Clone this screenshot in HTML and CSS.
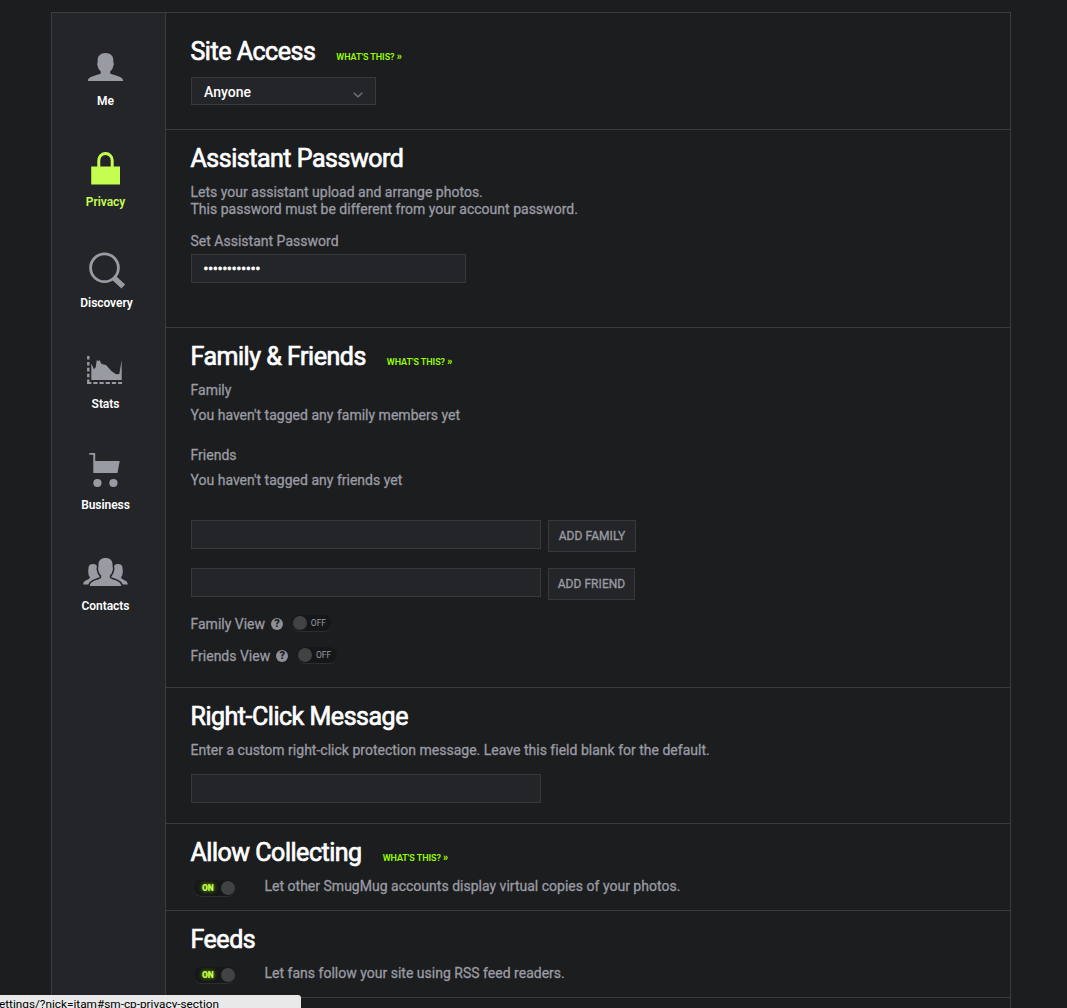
FILE: index.html
```html
<!DOCTYPE html>
<html lang="en">
<head>
<meta charset="utf-8">
<title>Account Settings - Privacy</title>
<link rel="stylesheet" href="styles.css">
</head>
<body>
<div class="panel">
  <nav class="sidebar">
    <a class="tab">
      <svg class="icon" viewBox="0 0 47 48"><path d="M23.500 9C28.500 9 31.800 12 31.300 17L31.800 20.500Q31 25 28.200 27.500V29.500C32 31.500 41.200 32 41.200 37H5.800C5.800 32 15 31.500 18.800 29.500V27.500Q16 25 15.200 20.500L15.700 17C15.200 12 18.500 9 23.500 9Z"/></svg>
      <span>Me</span>
    </a>
    <a class="tab active">
      <svg class="icon" viewBox="0 0 47 48"><path d="M9.200 21.500H38V39.500H9.200Z"/><path d="M16.800 22V15.200A6.700 6.700 0 0 1 30.200 15.200V22" fill="none" stroke="currentColor" stroke-width="3"/></svg>
      <span>Privacy</span>
    </a>
    <a class="tab discovery">
      <svg class="icon" viewBox="0 0 47 48"><circle cx="22.500" cy="21.800" r="13.900" fill="none" stroke="currentColor" stroke-width="2.800"/><path d="M31.300 31.300L41.300 40.600" stroke="currentColor" stroke-width="5.400"/></svg>
      <span>Discovery</span>
    </a>
    <a class="tab">
      <svg class="icon" viewBox="0 0 47 48"><path d="M9.300 16.500V33H39.700V13L37.300 27L34 27.300L29.700 24.300L24 18L19.700 17L17.300 13L16.300 14L14.700 13.300L13.700 20.300L12 22.300Z"/><path d="M6.300 9V36" fill="none" stroke="currentColor" stroke-width="2.400" stroke-dasharray="3.600 2.300"/><path d="M5.100 36H40" fill="none" stroke="currentColor" stroke-width="2" stroke-dasharray="4.200 2"/></svg>
      <span>Stats</span>
    </a>
    <a class="tab">
      <svg class="icon" viewBox="0 0 47 48"><path d="M7.300 5H13.200V13H37.700L35.500 25H11.300V6.800H7.300Z"/><circle cx="15.400" cy="35" r="4.100"/><circle cx="31.400" cy="35" r="4.100"/></svg>
      <span>Business</span>
    </a>
    <a class="tab">
      <svg class="icon" viewBox="0 0 47 48"><path id="side" d="M11 15C14 15 15 16.500 15.200 18.500L15 21.500L16.800 25.500L18.200 28.500C15 31 7.500 30.500 6.500 35.500H1.200C1 31 7.500 31 8 28.500Q6 26 6.200 22.500L6.500 19C6.500 16.500 8 15 11 15Z"/><use href="#side" transform="translate(47 0) scale(-1 1)"/><path class="front" d="M23.500 9C28 9 31 11.500 30.500 16.500L31 20Q30.300 24.500 27.800 26.800V28.800C31 31.500 39.200 31.500 39.200 37H7.800C7.800 31.500 16 31.500 19.200 28.800V26.800Q16.700 24.500 16 20L16.500 16.500C16 11.500 19 9 23.500 9Z"/></svg>
      <span>Contacts</span>
    </a>
  </nav>

  <main class="content">
    <section class="section access">
      <header class="head"><h2>Site Access</h2><a class="help">WHAT'S THIS? <b>»</b></a></header>
      <div class="select"><span>Anyone</span><svg class="chevron" viewBox="0 0 10 6"><path d="M.7 .7L5 4.800L9.300 .7"/></svg></div>
    </section>

    <section class="section assistant">
      <header class="head"><h2>Assistant Password</h2></header>
      <p>Lets your assistant upload and arrange photos.<br>This password must be different from your account password.</p>
      <div class="label">Set Assistant Password</div>
      <div class="field password">••••••••••••</div>
    </section>

    <section class="section family">
      <header class="head"><h2>Family &amp; Friends</h2><a class="help">WHAT'S THIS? <b>»</b></a></header>
      <p>Family</p>
      <p class="note">You haven't tagged any family members yet</p>
      <p class="group">Friends</p>
      <p class="note">You haven't tagged any friends yet</p>
      <div class="add-row first"><div class="field wide"></div><div class="button">ADD FAMILY</div></div>
      <div class="add-row"><div class="field wide"></div><div class="button friend">ADD FRIEND</div></div>
      <div class="view-row"><span class="view-name">Family View</span><span class="question">?</span><span class="toggle"><i class="knob"></i><span>OFF</span></span></div>
      <div class="view-row"><span class="view-name">Friends View</span><span class="question">?</span><span class="toggle"><i class="knob"></i><span>OFF</span></span></div>
    </section>

    <section class="section message">
      <header class="head"><h2>Right-Click Message</h2></header>
      <p>Enter a custom right-click protection message. Leave this field blank for the default.</p>
      <div class="field wide"></div>
    </section>

    <section class="section brief">
      <header class="head"><h2>Allow Collecting</h2><a class="help">WHAT'S THIS? <b>»</b></a></header>
      <div class="switch-row"><span class="toggle on"><span>ON</span><i class="knob"></i></span><p>Let other SmugMug accounts display virtual copies of your photos.</p></div>
    </section>

    <section class="section brief">
      <header class="head"><h2>Feeds</h2></header>
      <div class="switch-row"><span class="toggle on"><span>ON</span><i class="knob"></i></span><p>Let fans follow your site using RSS feed readers.</p></div>
    </section>
  </main>
</div>
<div class="status"><span>ettings/?nick=itam#sm-cp-privacy-section</span></div>
</body>
</html>
```

FILE: styles.css
```css
* { box-sizing: border-box; }
html, body { height: 100%; }
body {
  margin: 0;
  padding: 12px 0 0 51px;
  overflow: hidden;
  background: #1c1d1f;
  color: #9a9ba3;
  font: 14px/17px Roboto, sans-serif;
}
.panel {
  display: flex;
  width: 960px;
  height: 996px;
  border: 1px solid #3b3c3f;
  border-bottom: 0;
  overflow: hidden;
}
.sidebar {
  width: 114px;
  flex: none;
  padding: 31px 6px 0 0;
  background: #242529;
  border-right: 1px solid #3b3c3f;
}
.tab {
  display: flex;
  flex-direction: column;
  align-items: center;
  height: 101px;
  color: #999ba3;
}
.icon { width: 47px; height: 48px; fill: currentColor; }
.front { stroke: #242529; stroke-width: 3; paint-order: stroke; }
.tab span { color: #fff; font-size: 12px; font-weight: 600; line-height: 18px; letter-spacing: -.05px; }
.tab.active, .tab.active span { color: #c4ff50; }
.tab.discovery span { padding-left: 2px; }

.content { flex: 1; }
.section { padding: 14px 0 0 25px; border-bottom: 1px solid #3b3c3f; }
.access { height: 117px; padding-top: 24px; }
.assistant { height: 198px; }
.family { height: 360px; }
.message { height: 136px; }
.brief { height: 87px; }

.head { display: flex; height: 30px; margin: 0 0 10px -.5px; }
h2 {
  margin: 0;
  color: #fff;
  font-size: 25px;
  font-weight: 400;
  line-height: 30px;
  letter-spacing: -.48px;
  -webkit-text-stroke: .7px #fff;
}
.help { margin-left: 21px; color: #9f0; font-size: 9px; font-weight: 600; line-height: 40px; letter-spacing: -.05px; }
.help b { font-size: 10px; font-weight: 900; }
p, .label { margin: 0 0 0 -.5px; letter-spacing: .01px; -webkit-text-stroke: .3px currentColor; }
.label { margin: 15px 0 4px -.5px; }
.note { margin-top: 8px; }
.group { margin-top: 23px; }

.field { height: 29px; background: #242529; border: 1px solid #38393c; }
.wide { width: 350px; }
.password { width: 275px; padding-left: 11.500px; color: #fff; line-height: 29px; -webkit-text-stroke: .7px #fff; }
.message .field { margin-top: 15px; }
.select {
  display: flex;
  justify-content: space-between;
  align-items: center;
  width: 185px;
  height: 28px;
  margin-top: 10px;
  padding: 0 12px;
  background: #242529;
  border: 1px solid #38393c;
  color: #fff;
  font-weight: 500;
  line-height: 19px;
}
.select span { padding-top: 3px; }
.chevron { width: 10px; height: 6px; margin-top: 7px; fill: none; stroke: #74757b; stroke-width: 1.3; }

.add-row { display: flex; gap: 7px; height: 32px; margin-bottom: 16px; }
.add-row.first { margin-top: 31px; }
.button {
  width: 88px;
  height: 32px;
  background: #242529;
  border: 1px solid #38393c;
  font-size: 12px;
  line-height: 30px;
  letter-spacing: .05px;
  text-align: center;
  white-space: nowrap;
  -webkit-text-stroke: .3px currentColor;
}
.button.friend { width: 87px; }

.view-row { display: flex; align-items: flex-start; height: 16px; margin: 0 0 16px -.5px; }
.view-name { -webkit-text-stroke: .3px currentColor; }
.question {
  width: 12px;
  height: 12px;
  margin: 2px 9px 0 6px;
  border-radius: 50%;
  background: #8e9097;
  color: #1c1d1f;
  font-size: 11px;
  font-weight: 900;
  line-height: 12px;
  text-align: center;
}
.toggle {
  display: flex;
  align-items: center;
  width: 40px;
  height: 16px;
  margin-top: -1px;
  padding: 0 6px 0 1px;
  justify-content: space-between;
  border-radius: 8px;
  background: #161718;
  box-shadow: 0 1px 0 #2d2e30;
  font-size: 8.500px;
  line-height: 16px;
}
.knob { width: 14px; height: 14px; border-radius: 50%; background: #414244; }
.toggle.on {
  padding: 0 0 0 8px;
  width: 41px;
  color: #c4ff50;
  font-weight: 900;
  text-shadow: 0 0 4px #8bd600;
}
.switch-row { display: flex; height: 17px; padding-left: 3px; }
.switch-row .toggle { margin-top: 2px; }
.switch-row p { margin-left: 29.500px; }

.status {
  position: absolute;
  left: 0;
  bottom: 0;
  display: flex;
  justify-content: flex-end;
  width: 301px;
  height: 13px;
  padding-right: 82px;
  overflow: hidden;
  background: #e9e9e9;
  border-top-right-radius: 3px;
  color: #000;
  font: 11.800px/19px Roboto, sans-serif;
  white-space: nowrap;
}
```
